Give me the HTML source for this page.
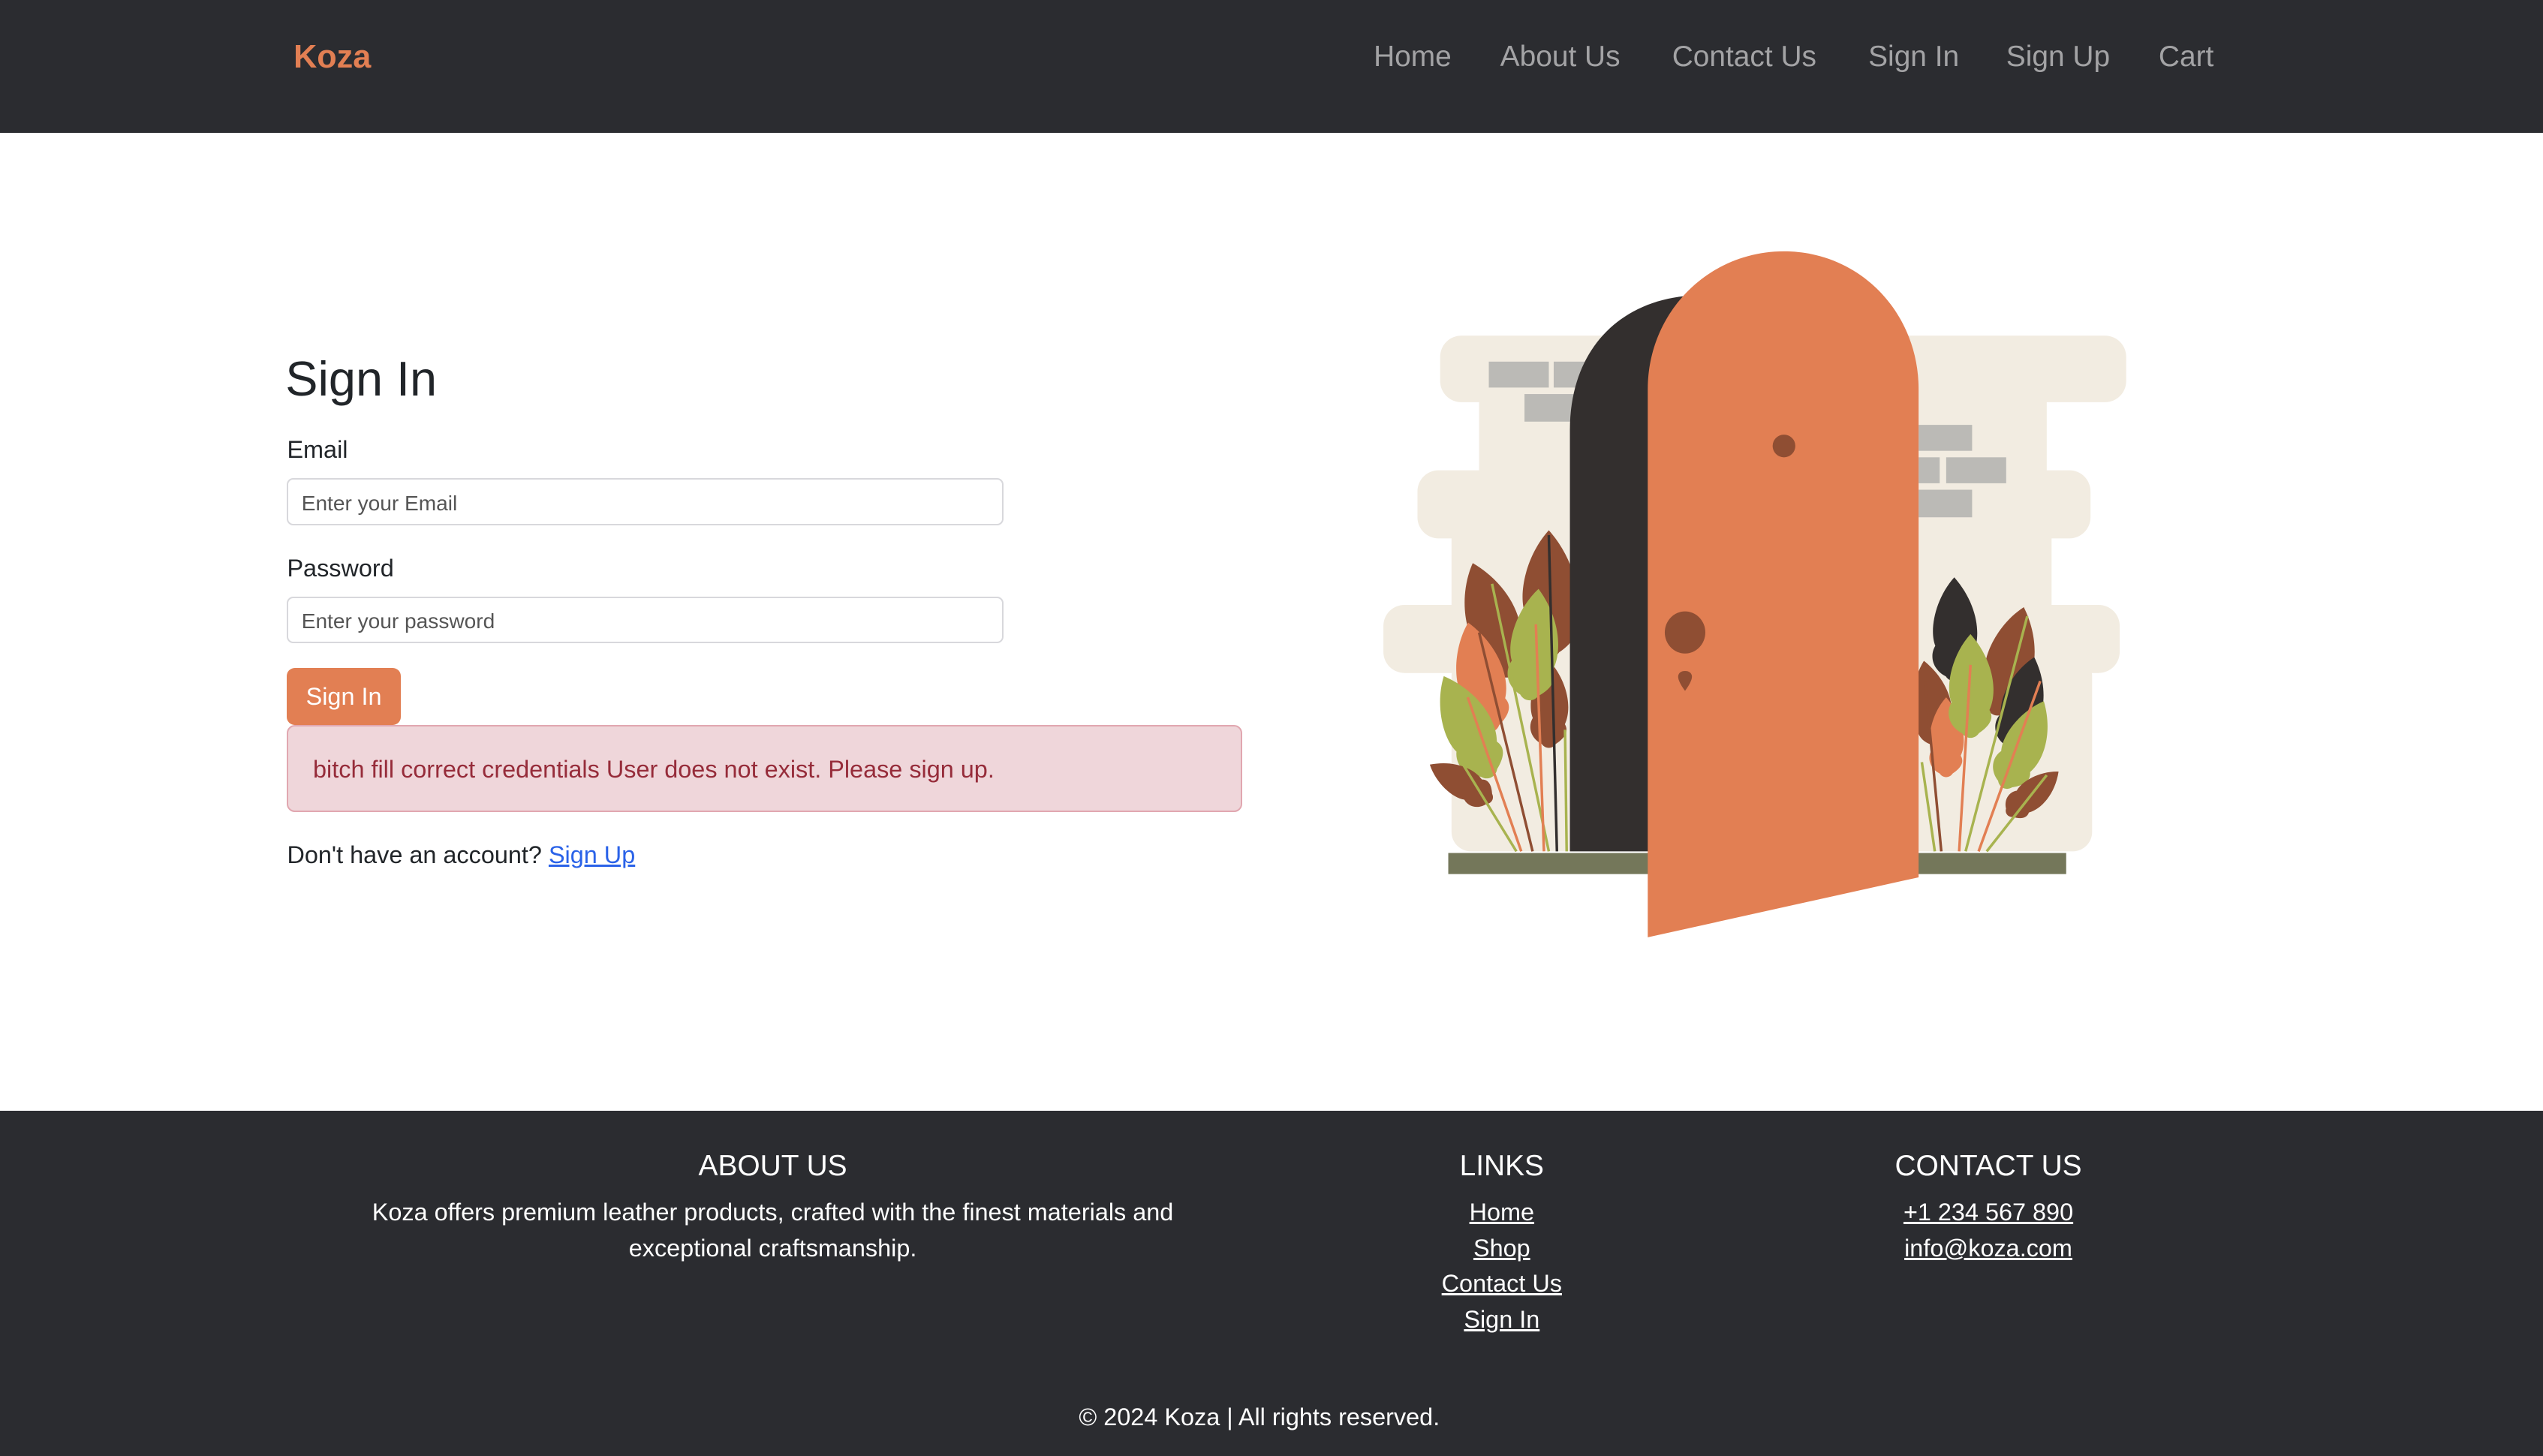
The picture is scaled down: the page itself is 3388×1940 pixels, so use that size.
<!DOCTYPE html>
<html><head><meta charset="utf-8">
<style>
html,body{margin:0;padding:0;}
body{width:1568px;height:898px;zoom:2.16071;position:relative;overflow:hidden;background:#fff;font-family:"Liberation Sans",sans-serif;color:#212529;}
.a{position:absolute;white-space:nowrap;}
.nav{position:absolute;left:0;top:0;width:1568px;height:82px;background:#2b2c30;}
.nav a{position:absolute;top:25px;font-size:18px;color:#a3a3a5;text-decoration:none;}
.inp{position:absolute;left:177px;width:440px;height:27px;border:1px solid #d8d8dc;border-radius:4px;background:#fff;}
.inp span{position:absolute;left:8px;top:7px;font-size:13px;color:#555;}
.foot{position:absolute;left:0;top:685px;width:1568px;height:213px;background:#2b2c30;color:#fff;}
.foot .c{position:absolute;text-align:center;font-size:15px;line-height:22px;}
.foot h3{margin:0 0 7px;font-size:18px;font-weight:normal;line-height:22px;}
.foot u{text-decoration:underline;}
</style></head><body>
<div class="nav">
  <div class="a" style="left:181px;top:24px;font-size:20px;font-weight:bold;color:#e27f53;">Koza</div>
  <a style="left:847px">Home</a>
  <a style="left:925px">About Us</a>
  <a style="left:1031px">Contact Us</a>
  <a style="left:1152px">Sign In</a>
  <a style="left:1237px">Sign Up</a>
  <a style="left:1331px">Cart</a>
</div>

<div class="a" style="left:176px;top:216px;font-size:30px;font-weight:500;">Sign In</div>
<div class="a" style="left:177px;top:269px;font-size:15px;">Email</div>
<div class="inp" style="top:295px"><span>Enter your Email</span></div>
<div class="a" style="left:177px;top:342px;font-size:15px;">Password</div>
<div class="inp" style="top:368px"><span>Enter your password</span></div>
<div class="a" style="left:177px;top:412px;width:70px;height:35px;background:#e27f53;border-radius:5px;color:#fff;font-size:15px;line-height:36px;text-align:center;">Sign In</div>
<div class="a" style="left:177px;top:447px;width:587px;height:52px;background:#efd6da;border:1px solid #e1a7b0;border-radius:5px;"></div>
<div class="a" style="left:193px;top:466px;font-size:15px;color:#962c3a;">bitch fill correct credentials User does not exist. Please sign up.</div>
<div class="a" style="left:177px;top:519px;font-size:15px;">Don't have an account? <span style="color:#2a62e8;text-decoration:underline;">Sign Up</span></div>

<svg class="a" style="left:0;top:0" width="1568" height="898" viewBox="0 0 1568 898">
  <g fill="#f2ece1">
    <rect x="888" y="207" width="423" height="41" rx="13"/>
    <rect x="874" y="290" width="415" height="42" rx="13"/>
    <rect x="853" y="373" width="454" height="42" rx="13"/>
    <rect x="912" y="240" width="350" height="60"/>
    <rect x="895" y="325" width="370" height="60"/>
    <rect x="895" y="405" width="395" height="120" rx="12"/>
  </g>
  <g fill="#bbbab6">
    <rect x="918" y="223" width="37" height="16"/><rect x="958" y="223" width="30" height="16"/><rect x="940" y="243" width="35" height="17"/>
    <rect x="1183" y="262" width="33" height="16"/><rect x="1183" y="282" width="13" height="16"/><rect x="1200" y="282" width="37" height="16"/><rect x="1183" y="302" width="33" height="17"/>
  </g>
  <rect x="893" y="526" width="381" height="13" fill="#74775a"/>
  <defs>
    <g id="lf"><path d="M0,-60 C22,-35 26,-5 18,12 C24,22 14,30 8,34 C4,40 -4,40 -8,34 C-20,28 -24,15 -18,5 C-24,-10 -18,-40 0,-60Z"/></g>
  </defs>
  <g>
    <use href="#lf" fill="#8f4e33" transform="translate(922,390) rotate(-18) scale(0.75)"/>
    <use href="#lf" fill="#8f4e33" transform="translate(955,375) scale(0.8)"/>
    <use href="#lf" fill="#e27f53" transform="translate(914,425) rotate(-12) scale(0.7)"/>
    <use href="#lf" fill="#8f4e33" transform="translate(955,440) scale(0.55)"/>
    <use href="#lf" fill="#a8b34f" transform="translate(945,405) rotate(5) scale(0.7)"/>
    <use href="#lf" fill="#a8b34f" transform="translate(908,455) rotate(-25) scale(0.7)"/>
    <use href="#lf" fill="#8f4e33" transform="translate(905,485) rotate(-60) scale(0.45)"/>
    <g stroke-width="1.6" fill="none">
      <line x1="920" y1="360" x2="955" y2="525" stroke="#a8b34f"/>
      <line x1="912" y1="390" x2="945" y2="525" stroke="#8f4e33"/>
      <line x1="905" y1="430" x2="938" y2="525" stroke="#e27f53"/>
      <line x1="900" y1="468" x2="935" y2="525" stroke="#a8b34f"/>
      <line x1="947" y1="385" x2="952" y2="525" stroke="#e27f53"/>
      <line x1="955" y1="330" x2="960" y2="525" stroke="#332f2e"/>
      <line x1="965" y1="450" x2="966" y2="525" stroke="#a8b34f"/>
    </g>
  </g>
  <g>
    <use href="#lf" fill="#332f2e" transform="translate(1205,395) rotate(0) scale(0.65)"/>
    <use href="#lf" fill="#8f4e33" transform="translate(1237,415) rotate(15) scale(0.7)"/>
    <use href="#lf" fill="#8f4e33" transform="translate(1192,440) rotate(-10) scale(0.55)"/>
    <use href="#lf" fill="#e27f53" transform="translate(1200,460) scale(0.5)"/>
    <use href="#lf" fill="#a8b34f" transform="translate(1215,430) scale(0.65)"/>
    <use href="#lf" fill="#332f2e" transform="translate(1245,440) rotate(15) scale(0.6)"/>
    <use href="#lf" fill="#a8b34f" transform="translate(1245,465) rotate(25) scale(0.6)"/>
    <use href="#lf" fill="#8f4e33" transform="translate(1250,492) rotate(50) scale(0.42)"/>
    <g stroke-width="1.6" fill="none">
      <line x1="1250" y1="380" x2="1212" y2="525" stroke="#a8b34f"/>
      <line x1="1258" y1="420" x2="1220" y2="525" stroke="#e27f53"/>
      <line x1="1262" y1="478" x2="1225" y2="525" stroke="#a8b34f"/>
      <line x1="1215" y1="410" x2="1208" y2="525" stroke="#e27f53"/>
      <line x1="1187" y1="420" x2="1197" y2="525" stroke="#8f4e33"/>
      <line x1="1185" y1="470" x2="1193" y2="525" stroke="#a8b34f"/>
    </g>
  </g>
  <path d="M968,525 L968,265 C968,215 1000,182 1050,182 L1060,182 L1060,525Z" fill="#332f2e"/>
  <path d="M1016,578 L1016,240 C1016,193 1053,155 1100,155 C1147,155 1183,193 1183,240 L1183,541Z" fill="#e27f53"/>
  <circle cx="1100" cy="275" r="7" fill="#8f4e33"/>
  <ellipse cx="1039" cy="390" rx="12.5" ry="13" fill="#8f4e33"/>
  <path d="M1039,426 C1036,422 1034,418 1035,416 C1036,413 1042,413 1043,416 C1044,418 1042,422 1039,426Z" fill="#8f4e33"/>
</svg>

<div class="foot">
  <div class="c" style="left:195px;width:563px;top:23px;"><h3>ABOUT US</h3>Koza offers premium leather products, crafted with the finest materials and exceptional craftsmanship.</div>
  <div class="c" style="left:826px;width:200px;top:23px;"><h3>LINKS</h3><u>Home</u><br><u>Shop</u><br><u>Contact Us</u><br><u>Sign In</u></div>
  <div class="c" style="left:1126px;width:200px;top:23px;"><h3>CONTACT US</h3><u>+1 234 567 890</u><br><u>info@koza.com</u></div>
  <div class="c" style="left:0;width:1553px;top:178px;">© 2024 Koza | All rights reserved.</div>
</div>
</body></html>
